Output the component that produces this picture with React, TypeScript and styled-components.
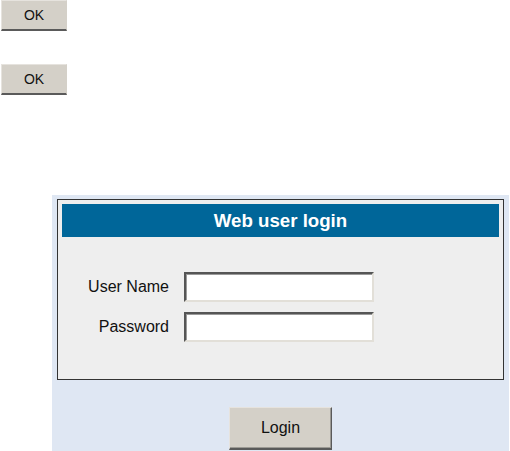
import styled, { createGlobalStyle } from "styled-components";

const GlobalStyle = createGlobalStyle`
  body {
    margin: 0;
    background: #ffffff;
    font-family: "Liberation Sans", Arial, sans-serif;
  }
`;

const PageStyled = styled.div`
  display: flex;
  flex-direction: column;
  width: 510px;
  min-height: 451px;
`;

const OkStackStyled = styled.div`
  display: flex;
  flex-direction: column;
  gap: 33px;
  padding-left: 1px;
`;

const ClassicButton = styled.button<{ $w: number; $h: number; $size: number }>`
  box-sizing: border-box;
  width: ${(p) => p.$w}px;
  height: ${(p) => p.$h}px;
  padding: 0;
  margin: 0;
  background: #d4d0c8;
  border: none;
  border-top: 1px solid #e6e3de;
  border-left: 1px solid #e6e3de;
  border-right: 1px solid #5a5a5a;
  border-bottom: 2px solid #5a5a5a;
  box-shadow: inset -1px -1px 0 #9c9a94;
  color: #111;
  font-family: "Liberation Sans", Arial, sans-serif;
  font-size: ${(p) => p.$size}px;
  cursor: pointer;
`;

const OkButton = styled(ClassicButton)`
  border-right-color: #d4d0c8;
  box-shadow: none;
`;

const PanelStyled = styled.div`
  margin-top: 100px;
  margin-left: 52px;
  width: 457px;
  flex: 1;
  min-height: 256px;
  box-sizing: border-box;
  padding: 4px 5px 0 5px;
  background: #dfe7f3;
  display: flex;
  flex-direction: column;
  align-items: stretch;
`;

const BoxStyled = styled.div`
  border: 1px solid #333333;
  background: #eeeeee;
  padding: 4px;
`;

const HeaderStyled = styled.div`
  height: 33px;
  background: #006699;
  color: #ffffff;
  font-weight: bold;
  font-size: 18.67px;
  display: flex;
  align-items: center;
  justify-content: center;
`;

const FormStyled = styled.div`
  display: grid;
  grid-template-columns: 107px 190px;
  column-gap: 15px;
  row-gap: 10px;
  align-items: center;
  padding: 35px 0 33px 0;
`;

const LabelStyled = styled.label`
  text-align: right;
  font-size: 16px;
  color: #111;
`;

const InputStyled = styled.input`
  box-sizing: border-box;
  width: 190px;
  height: 30px;
  margin: 0;
  padding: 2px 4px;
  background: #ffffff;
  border-top: 2px solid #555555;
  border-left: 2px solid #555555;
  border-right: 2px solid #e2dfd8;
  border-bottom: 2px solid #e2dfd8;
  box-shadow: inset 1px 1px 0 #9a9a9a;
  font-family: "Liberation Sans", Arial, sans-serif;
  font-size: 14px;
  outline: none;
`;

const FooterStyled = styled.div`
  display: flex;
  justify-content: center;
  padding-top: 27px;
`;

const App = () => {
  return (
    <PageStyled>
      <GlobalStyle />
      <OkStackStyled>
        <OkButton $w={66} $h={31} $size={14}>
          OK
        </OkButton>
        <OkButton $w={66} $h={31} $size={14}>
          OK
        </OkButton>
      </OkStackStyled>
      <PanelStyled>
        <BoxStyled>
          <HeaderStyled>Web user login</HeaderStyled>
          <FormStyled>
            <LabelStyled htmlFor="user">User Name</LabelStyled>
            <InputStyled id="user" type="text" />
            <LabelStyled htmlFor="pass">Password</LabelStyled>
            <InputStyled id="pass" type="password" />
          </FormStyled>
        </BoxStyled>
        <FooterStyled>
          <ClassicButton $w={103} $h={43} $size={16}>
            Login
          </ClassicButton>
        </FooterStyled>
      </PanelStyled>
    </PageStyled>
  );
};

export default App;
